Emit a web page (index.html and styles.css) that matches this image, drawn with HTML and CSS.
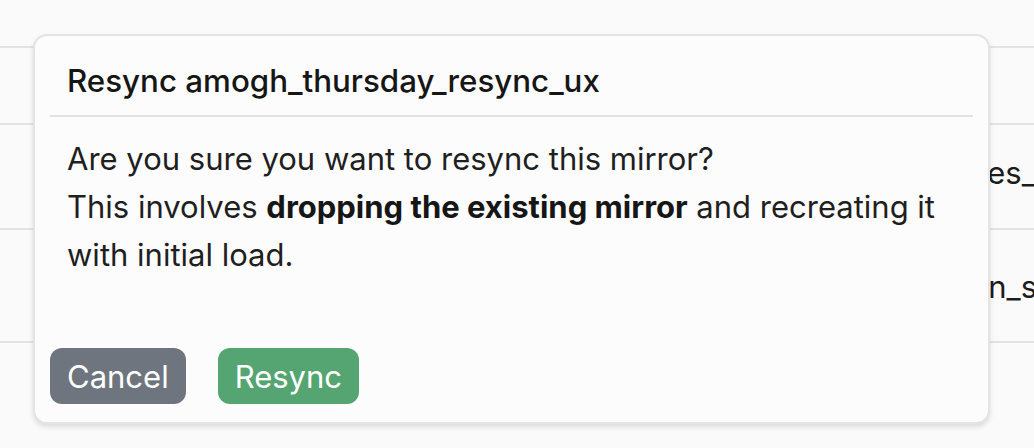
FILE: index.html
```html
<!DOCTYPE html>
<html lang="en">
<head>
<meta charset="utf-8">
<title>Resync mirror</title>
<link rel="stylesheet" href="styles.css">
</head>
<body>
<div class="table">
  <div class="row row-head"></div>
  <div class="row row-1"></div>
  <div class="row row-2"><span class="cell-text cell-a">tables_mirror</span></div>
  <div class="row row-3"><span class="cell-text cell-b">pg_main_schema</span></div>
</div>

<div class="modal" role="dialog" aria-labelledby="modal-title">
  <div class="modal-header">
    <h2 id="modal-title" class="modal-title">Resync amogh_thursday_resync_ux</h2>
  </div>
  <div class="modal-body">
    <p>Are you sure you want to resync this mirror?<br>This involves <strong>dropping the existing mirror</strong> and recreating it with initial load.</p>
  </div>
  <div class="modal-footer">
    <button class="btn btn-cancel">Cancel</button>
    <button class="btn btn-resync">Resync</button>
  </div>
</div>
</body>
</html>
```

FILE: styles.css
```css
html, body {
  margin: 0;
  padding: 0;
}
body {
  background: #fafafa;
  font-family: Inter, "Noto Sans", sans-serif;
  color: #1c1c1c;
  width: 1034px;
  height: 448px;
  overflow: hidden;
  position: relative;
}

.table {
  display: flex;
  flex-direction: column;
}
.row {
  border-bottom: 2px solid #e3e3e3;
  display: flex;
  align-items: center;
  white-space: nowrap;
  overflow: hidden;
  font-size: 31px;
  color: #1c1c1c;
}
.row-head { height: 46px; }
.row-1 { height: 75px; }
.row-2 { height: 103px; }
.row-3 { height: 111px; }
.row-2 .cell-text { padding-bottom: 8px; }
.row-3 .cell-text { padding-top: 2px; }
.cell-a { padding-left: 933px; }
.cell-b { padding-left: 883px; }

.modal {
  position: absolute;
  left: 33px;
  top: 34px;
  width: 957px;
  height: 390px;
  box-sizing: border-box;
  background: #fcfcfc;
  border: 2px solid #e4e4e4;
  border-radius: 14px;
  box-shadow: 0 3px 5px rgba(0, 0, 0, 0.12);
  display: flex;
  flex-direction: column;
}

.modal-header {
  margin: 0 15px;
  height: 81px;
  box-sizing: border-box;
  border-bottom: 2px solid #e2e2e2;
  display: flex;
  align-items: center;
  padding: 11px 17px 0;
}
.modal-title {
  margin: 0;
  font-size: 31.3px;
  font-weight: 500;
  color: #161616;
}

.modal-body {
  flex: 1;
  padding: 18px 32px 0;
}
.modal-body p {
  margin: 0;
  font-size: 31px;
  line-height: 48px;
  color: #1f1f1f;
}
.modal-body strong {
  font-weight: 700;
  color: #161616;
}

.modal-footer {
  display: flex;
  gap: 32px;
  padding: 0 15px 18px;
}
.btn {
  font-family: Inter, "Noto Sans", sans-serif;
  font-size: 31px;
  height: 56px;
  padding: 0 17px;
  border: none;
  border-radius: 12px;
  color: #ffffff;
  cursor: pointer;
}
.btn-cancel { background: #6e757e; }
.btn-resync { background: #55a572; }
```
